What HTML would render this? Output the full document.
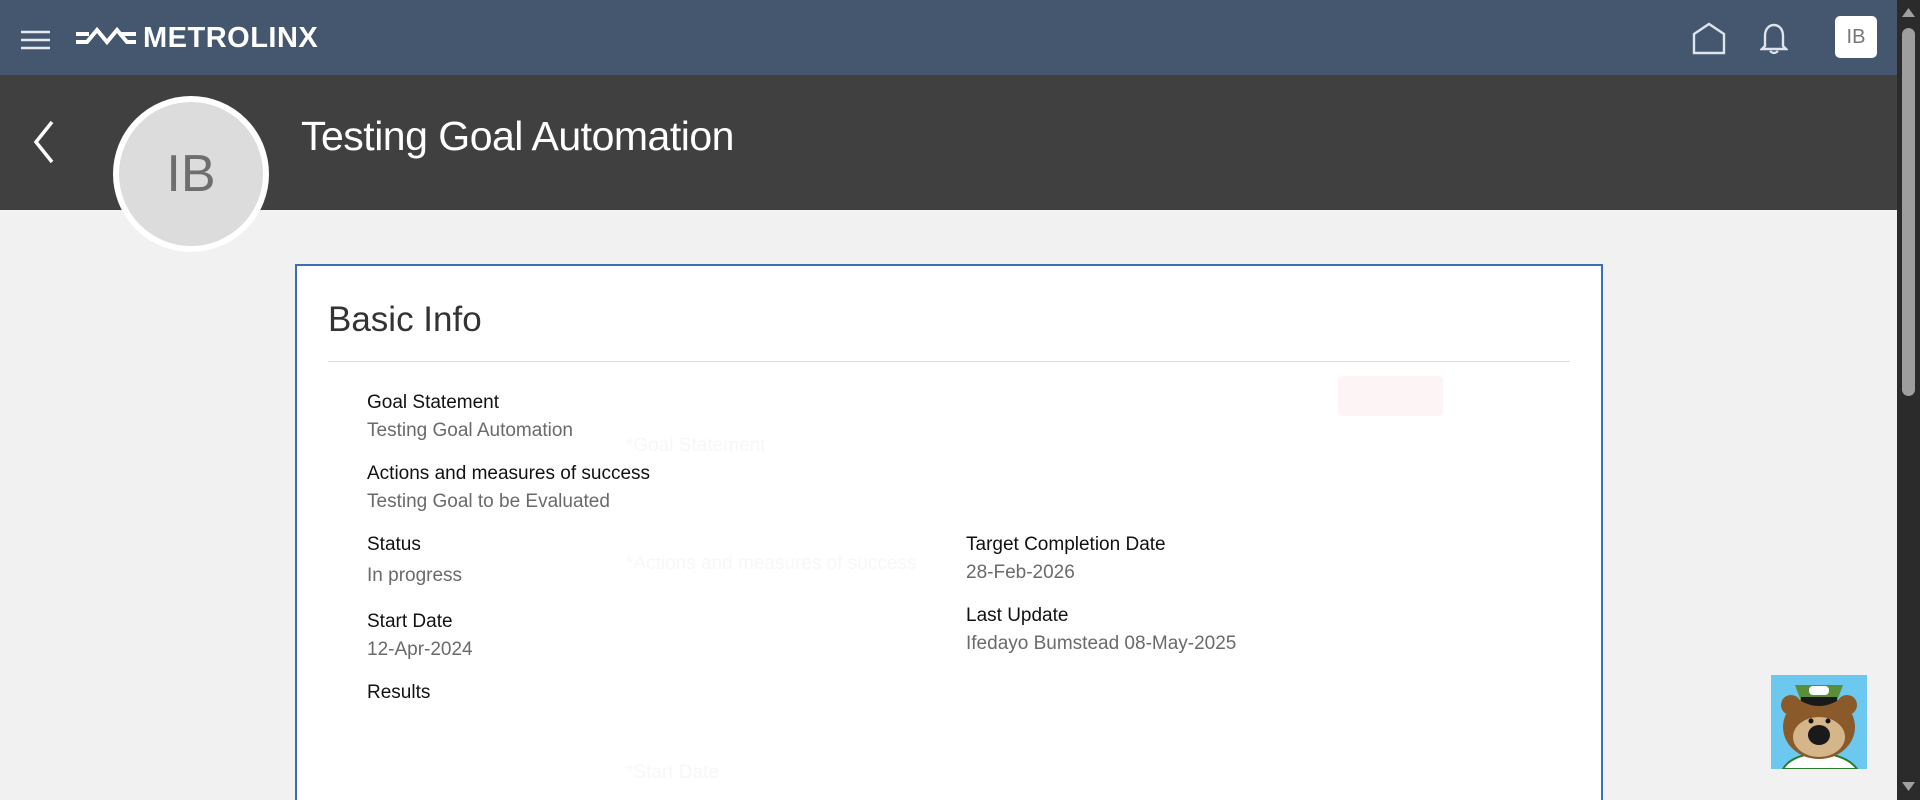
<!DOCTYPE html>
<html style="width:1920px;height:800px;overflow:hidden"><head><meta charset="utf-8"><style>
*{margin:0;padding:0;box-sizing:border-box}
body{width:1920px;height:800px;overflow:hidden;background:#f1f1f1;font-family:"Liberation Sans",sans-serif;position:relative}
.top{position:absolute;left:0;top:0;width:1897px;height:75px;background:#45566f}
.dark{position:absolute;left:0;top:75px;width:1897px;height:135px;background:#404040}
.sb{position:absolute;left:1897px;top:0;width:23px;height:800px;background:#2b2b2b}
.thumb{position:absolute;left:1902px;top:28px;width:13px;height:368px;background:#9e9e9e;border-radius:7px}
.abs{position:absolute}
.title{left:301px;top:113px;color:#fff;font-size:41px;letter-spacing:-0.5px}
.av{left:113px;top:96px;width:156px;height:156px;border-radius:50%;background:#dcdcdc;border:6px solid #fff;color:#6e6e6e;font-size:52px;display:flex;align-items:center;justify-content:center}
.card{left:295px;top:264px;width:1308px;height:540px;background:#fff;border:2px solid #3a6fb5;border-bottom:none}
.bi{left:328px;top:300px;font-size:35px;color:#333}
.hr{left:328px;top:361px;width:1242px;height:1px;background:#d8dde3}
.l{font-size:19px;color:#111}
.v{font-size:19px;color:#6a6a6a}
.gh{font-size:19px;color:#f7f7f7}
</style></head><body>
<div class="top"></div><div class="dark"></div>
<div class="sb"></div><div class="thumb"></div>
<svg class="abs" style="left:1902px;top:8px" width="13" height="10"><path d="M0 9L6.5 0 13 9Z" fill="#a0a0a0"/></svg>
<svg class="abs" style="left:1902px;top:782px" width="13" height="10"><path d="M0 0L6.5 9 13 0Z" fill="#a0a0a0"/></svg>
<svg class="abs" style="left:21px;top:30px" width="30" height="20"><path d="M0 2H29M0 10H29M0 18H29" stroke="#e6eaf0" stroke-width="2.4"/></svg>
<svg class="abs" style="left:75px;top:25px" width="62" height="26"><path d="M1 9H14M1 17H12L22 5 32 17 42 5 52 17 61 17M44 9H61" stroke="#fff" stroke-width="4" fill="none"/></svg>
<div class="abs" style="left:143px;top:22px;color:#fff;font-size:29px;font-weight:bold;letter-spacing:0.5px">METROLINX</div>
<svg class="abs" style="left:1692px;top:22px" width="34" height="33"><path d="M2 31V12L17 2 32 12V31Z" fill="none" stroke="#dfe5ee" stroke-width="2.4"/></svg>
<svg class="abs" style="left:1760px;top:22px" width="28" height="32"><path d="M5 24V14C5 7 9 3 14 3S23 7 23 14V24L26 27H2Z" fill="none" stroke="#dfe5ee" stroke-width="2.4"/><path d="M10 29Q14 33 18 29" fill="none" stroke="#dfe5ee" stroke-width="2.2"/></svg>
<div class="abs" style="left:1835px;top:16px;width:42px;height:42px;background:#fff;border-radius:5px;color:#777;font-size:20px;display:flex;align-items:center;justify-content:center">IB</div>
<svg class="abs" style="left:30px;top:120px" width="26" height="44"><path d="M22 2L6 22 22 42" fill="none" stroke="#fff" stroke-width="3.5"/></svg>
<div class="abs title">Testing Goal Automation</div>
<div class="abs av">IB</div>
<div class="abs card"></div>
<div class="abs bi">Basic Info</div>
<div class="abs hr"></div>
<div class="abs gh" style="left:626px;top:435px">*Goal Statement</div>
<div class="abs gh" style="left:626px;top:553px">*Actions and measures of success</div>
<div class="abs gh" style="left:626px;top:762px">*Start Date</div>
<div class="abs" style="left:1338px;top:376px;width:105px;height:40px;background:#fdf5f5;border-radius:4px"></div>
<div class="abs l" style="left:367px;top:392px">Goal Statement</div>
<div class="abs v" style="left:367px;top:420px">Testing Goal Automation</div>
<div class="abs l" style="left:367px;top:463px">Actions and measures of success</div>
<div class="abs v" style="left:367px;top:491px">Testing Goal to be Evaluated</div>
<div class="abs l" style="left:367px;top:534px">Status</div>
<div class="abs v" style="left:367px;top:565px">In progress</div>
<div class="abs l" style="left:367px;top:611px">Start Date</div>
<div class="abs v" style="left:367px;top:639px">12-Apr-2024</div>
<div class="abs l" style="left:367px;top:682px">Results</div>
<div class="abs l" style="left:966px;top:534px">Target Completion Date</div>
<div class="abs v" style="left:966px;top:562px">28-Feb-2026</div>
<div class="abs l" style="left:966px;top:605px">Last Update</div>
<div class="abs v" style="left:966px;top:633px">Ifedayo Bumstead 08-May-2025</div>
<svg class="abs" style="left:1771px;top:675px" width="96" height="94" viewBox="0 0 96 94">
<rect width="96" height="94" fill="#6cc8ef"/>
<path d="M12 94Q20 80 48 78 76 80 86 94Z" fill="#fff" stroke="#2d7a2d" stroke-width="2"/>
<circle cx="20" cy="30" r="10" fill="#8a5a2b"/><circle cx="76" cy="30" r="10" fill="#8a5a2b"/>
<ellipse cx="48" cy="52" rx="36" ry="32" fill="#8a5a2b"/>
<ellipse cx="48" cy="62" rx="26" ry="20" fill="#d5b68a"/>
<ellipse cx="48" cy="60" rx="11" ry="10" fill="#1a1a1a"/>
<circle cx="40" cy="46" r="2.5" fill="#111"/><circle cx="57" cy="46" r="2.5" fill="#111"/>
<path d="M24 10H72L66 26H30Z" fill="#5a8f3a"/><path d="M30 26Q48 36 66 26V22H30Z" fill="#1a1a1a"/>
<rect x="38" y="11" width="20" height="9" rx="4" fill="#fff"/>
</svg>
</body></html>
